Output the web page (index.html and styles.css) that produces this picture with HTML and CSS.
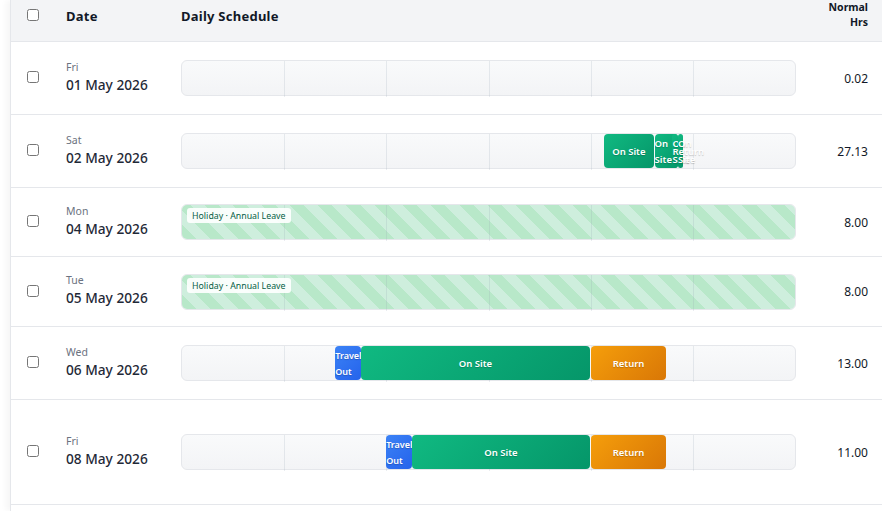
FILE: index.html
```html
<!DOCTYPE html>
<html>
<head>
    <title>Timesheet</title>
    <link rel="stylesheet" href="styles.css">
</head>
<body>
    <div class="sheet">
        <div class="row head">
            <div class="col-check"><input type="checkbox"></div>
            <div class="col-date">Date</div>
            <div class="col-schedule">Daily Schedule</div>
            <div class="col-hrs">Normal Hrs</div>
        </div>

        <div class="row h-72">
            <div class="col-check"><input type="checkbox"></div>
            <div class="col-date"><span class="day">Fri</span><span class="full-date">01 May 2026</span></div>
            <div class="col-schedule">
                <div class="bar"><i></i><i></i><i></i><i></i><i></i><i></i></div>
            </div>
            <div class="col-hrs">0.02</div>
        </div>

        <div class="row h-72">
            <div class="col-check"><input type="checkbox"></div>
            <div class="col-date"><span class="day">Sat</span><span class="full-date">02 May 2026</span></div>
            <div class="col-schedule">
                <div class="bar">
                    <i></i><i></i><i></i><i></i><i></i><i></i>
                    <div class="block site" style="left: 68.8%; width: 8.2%"><span>On Site</span></div>
                    <div class="block site" style="left: 77.1%; width: 3.8%"><span>On Site</span></div>
                    <div class="block site" style="left: 80%; width: 0.9%"><span>On Site</span></div>
                    <div class="block site" style="left: 80.9%; width: 0.8%"><span>On Site</span></div>
                    <div class="block ghost" style="left: 80%; width: 4.9%"><span>Return</span></div>
                </div>
            </div>
            <div class="col-hrs">27.13</div>
        </div>

        <div class="row h-68">
            <div class="col-check"><input type="checkbox"></div>
            <div class="col-date"><span class="day">Mon</span><span class="full-date">04 May 2026</span></div>
            <div class="col-schedule">
                <div class="bar">
                    <i></i><i></i><i></i><i></i><i></i><i></i>
                    <div class="holiday"><span class="holiday-label">Holiday · Annual Leave</span></div>
                </div>
            </div>
            <div class="col-hrs">8.00</div>
        </div>

        <div class="row h-69">
            <div class="col-check"><input type="checkbox"></div>
            <div class="col-date"><span class="day">Tue</span><span class="full-date">05 May 2026</span></div>
            <div class="col-schedule">
                <div class="bar">
                    <i></i><i></i><i></i><i></i><i></i><i></i>
                    <div class="holiday"><span class="holiday-label">Holiday · Annual Leave</span></div>
                </div>
            </div>
            <div class="col-hrs">8.00</div>
        </div>

        <div class="row h-72">
            <div class="col-check"><input type="checkbox"></div>
            <div class="col-date"><span class="day">Wed</span><span class="full-date">06 May 2026</span></div>
            <div class="col-schedule">
                <div class="bar">
                    <i></i><i></i><i></i><i></i><i></i><i></i>
                    <div class="block travel" style="left: 25%; width: 4.15%"><span>Travel Out</span></div>
                    <div class="block site" style="left: 29.15%; width: 37.45%"><span>On Site</span></div>
                    <div class="block back" style="left: 66.7%; width: 12.3%"><span>Return</span></div>
                </div>
            </div>
            <div class="col-hrs">13.00</div>
        </div>

        <div class="row h-104">
            <div class="col-check"><input type="checkbox"></div>
            <div class="col-date"><span class="day">Fri</span><span class="full-date">08 May 2026</span></div>
            <div class="col-schedule">
                <div class="bar">
                    <i></i><i></i><i></i><i></i><i></i><i></i>
                    <div class="block travel" style="left: 33.3%; width: 4.15%"><span>Travel Out</span></div>
                    <div class="block site" style="left: 37.45%; width: 29.15%"><span>On Site</span></div>
                    <div class="block back" style="left: 66.7%; width: 12.3%"><span>Return</span></div>
                </div>
            </div>
            <div class="col-hrs">11.00</div>
        </div>
    </div>
</body>
</html>
```

FILE: styles.css
```css
html, body {
    height: 100%;
}
body {
    margin: 0;
    padding-left: 10px;
    background: #fff;
    font-family: "Noto Sans", sans-serif;
    color: #111827;
    overflow: hidden;
}
.sheet {
    min-height: 100%;
    border-left: 1px solid #e5e7eb;
    box-shadow: -4px 0 6px rgba(0,0,0,0.04);
}
.row {
    display: flex;
    align-items: center;
    box-sizing: border-box;
    border-bottom: 1px solid #e5e7eb;
}
.head {
    height: 42px;
    align-items: flex-start;
    background: #f3f4f6;
    font-size: 13px;
    font-weight: 700;
    line-height: 15px;
    letter-spacing: 0.25px;
}
.head .col-check,
.head .col-date,
.head .col-schedule {
    padding-top: 9px;
}
.head .col-hrs {
    font-size: 10.5px;
    letter-spacing: 0;
    padding-left: 30px;
    box-sizing: border-box;
}
.h-72 { height: 73px; }
.h-68 { height: 69px; }
.h-69 { height: 70px; }
.h-104 { height: 105px; }

.col-check {
    width: 55px;
    padding-left: 16px;
    box-sizing: border-box;
    display: flex;
}
.col-check input {
    margin: 0 0 2px;
    width: 12px;
    height: 12px;
}
.col-date {
    width: 115px;
    display: flex;
    flex-direction: column;
}
.col-schedule {
    width: 615px;
}
.col-hrs {
    width: 72px;
    text-align: right;
    font-size: 12px;
}
.day {
    font-size: 10.5px;
    line-height: 13px;
    color: #6b7280;
}
.full-date {
    font-size: 13.7px;
    line-height: 22px;
    font-weight: 500;
    color: #1f2937;
}

.bar {
    position: relative;
    height: 36px;
    box-sizing: border-box;
    display: flex;
    border: 1px solid #e5e7eb;
    border-radius: 6px;
    background: linear-gradient(180deg, #f9fafb, #f3f4f6);
}
.bar i {
    flex: 1;
    position: relative;
    z-index: 1;
    margin-bottom: -2px;
    border-left: 1px solid rgba(150,165,180,0.2);
}
.bar i:first-child {
    border-left-color: transparent;
}
.block {
    position: absolute;
    z-index: 2;
    top: 0;
    bottom: 0;
    padding-top: 1px;
    display: flex;
    align-items: center;
    justify-content: safe center;
    box-sizing: border-box;
    border-radius: 4px;
    color: #fff;
    font-size: 9.5px;
    font-weight: 600;
    line-height: 16px;
    text-shadow: 0 1px 1px rgba(0,0,0,0.2);
}
.site {
    background: linear-gradient(135deg, #10b981, #059669);
}
.travel {
    font-size: 9px;
    background: linear-gradient(135deg, #3b82f6, #2563eb);
}
.back {
    background: linear-gradient(135deg, #f59e0b, #d97706);
}
.ghost {
    background: none;
}
.holiday {
    position: absolute;
    top: 0;
    left: 0;
    right: 0;
    bottom: 0;
    display: flex;
    align-items: flex-start;
    border-radius: 5px;
    padding: 3px 5px;
    background: repeating-linear-gradient(45deg, #b8e8c9 0 10px, #ceeedd 10px 20px);
}
.holiday-label {
    position: relative;
    z-index: 2;
    font-size: 8.8px;
    line-height: 14px;
    padding: 1px 5px 0;
    border-radius: 3px;
    color: #065f46;
    background: rgba(255,255,255,0.9);
}
```
